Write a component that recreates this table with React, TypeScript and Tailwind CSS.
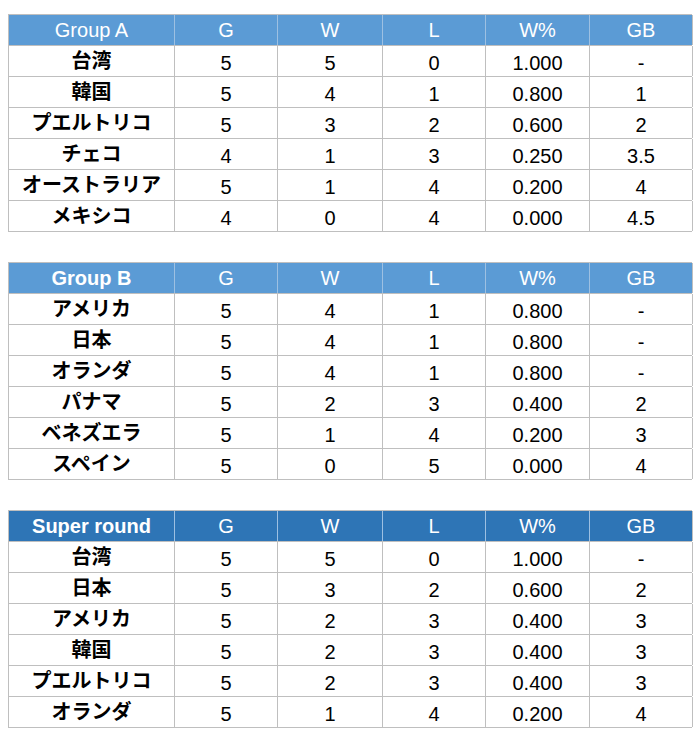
const groups = [
  {
    title: "Group A",
    bold: false,
    head: "bg-[#5b9bd5]",
    rows: [
      ["台湾", "5", "5", "0", "1.000", "-"],
      ["韓国", "5", "4", "1", "0.800", "1"],
      ["プエルトリコ", "5", "3", "2", "0.600", "2"],
      ["チェコ", "4", "1", "3", "0.250", "3.5"],
      ["オーストラリア", "5", "1", "4", "0.200", "4"],
      ["メキシコ", "4", "0", "4", "0.000", "4.5"],
    ],
  },
  {
    title: "Group B",
    bold: true,
    head: "bg-[#5b9bd5]",
    rows: [
      ["アメリカ", "5", "4", "1", "0.800", "-"],
      ["日本", "5", "4", "1", "0.800", "-"],
      ["オランダ", "5", "4", "1", "0.800", "-"],
      ["パナマ", "5", "2", "3", "0.400", "2"],
      ["ベネズエラ", "5", "1", "4", "0.200", "3"],
      ["スペイン", "5", "0", "5", "0.000", "4"],
    ],
  },
  {
    title: "Super round",
    bold: true,
    head: "bg-[#2e75b6]",
    rows: [
      ["台湾", "5", "5", "0", "1.000", "-"],
      ["日本", "5", "3", "2", "0.600", "2"],
      ["アメリカ", "5", "2", "3", "0.400", "3"],
      ["韓国", "5", "2", "3", "0.400", "3"],
      ["プエルトリコ", "5", "2", "3", "0.400", "3"],
      ["オランダ", "5", "1", "4", "0.200", "4"],
    ],
  },
];

const cols = ["G", "W", "L", "W%", "GB"];

const StandingsTable = ({ group }: { group: (typeof groups)[number] }) => (
  <div className="w-[684px] border-l border-t border-[#bfbfbf]">
    <div className={`grid grid-cols-[166px_103px_105px_103px_104px_103px] h-[31px] ${group.head} text-white border-b border-[#bfbfbf]`}>
      <div className={`flex items-center justify-center border-r border-[#9dc0e2] ${group.bold ? "font-bold" : ""}`}>
        {group.title}
      </div>
      {cols.map((c, i) => (
        <div
          key={c}
          className={`flex items-center justify-center border-r ${i === cols.length - 1 ? "border-[#bfbfbf]" : "border-[#9dc0e2]"}`}
        >
          {c}
        </div>
      ))}
    </div>
    {group.rows.map((row) => (
      <div
        key={row[0]}
        className="grid grid-cols-[166px_103px_105px_103px_104px_103px] h-[31px] border-b border-[#bfbfbf] text-black"
      >
        {row.map((cell, i) => (
          <div
            key={i}
            className={`flex items-center justify-center border-r border-[#bfbfbf] ${i === 0 ? "font-bold" : "pt-[4px]"}`}
          >
            {cell}
          </div>
        ))}
      </div>
    ))}
  </div>
);

export default function App() {
  return (
    <div className="w-[700px] h-[732px] bg-white pt-[14px] pl-[8px] flex flex-col gap-[30px] text-[20px] leading-[24px] font-['Liberation_Sans','Noto_Sans_CJK_JP',sans-serif]">
      {groups.map((g) => (
        <StandingsTable key={g.title} group={g} />
      ))}
    </div>
  );
}
